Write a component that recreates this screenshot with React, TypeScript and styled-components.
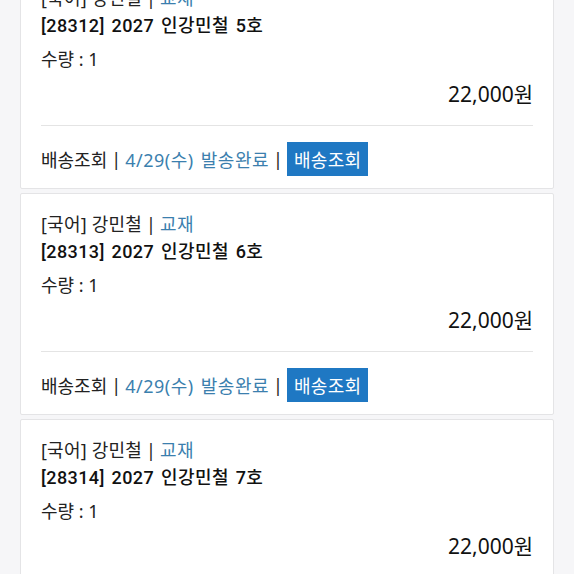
import React from "react";
import styled, { createGlobalStyle } from "styled-components";

const Global = createGlobalStyle`
  html, body { margin: 0; padding: 0; background: #f6f6f8; }
  body { font-family: "Noto Sans", "Noto Sans CJK KR", sans-serif; color: #1a1a1a; overflow: hidden; }
`;

const Page = styled.div`
  width: 574px;
  height: 574px;
  overflow: hidden;
  background: #f6f6f8;
`;

const List = styled.div`
  display: flex;
  flex-direction: column;
  gap: 4px;
  margin: -33px 20px 0 20px;
`;

const Card = styled.div`
  background: #fff;
  border: 1px solid #e4e4e6;
  border-radius: 2px;
  padding: 17px 20px 12px 20px;
  display: flex;
  flex-direction: column;
`;

const Category = styled.div`
  font-size: 18px;
  line-height: 27px;
  letter-spacing: 0.2px;
  color: #222;
`;

const Blue = styled.span`
  color: #3b7fae;
  letter-spacing: 0.5px;
  word-spacing: 2px;
`;

const Sep = styled.span`
  color: #222;
  margin: 0 4px;
`;

const Title = styled.div`
  font-family: "Roboto", "Noto Sans CJK KR", sans-serif;
  font-size: 18px;
  line-height: 27px;
  font-weight: 500;
  letter-spacing: 0.4px;
  word-spacing: 2px;
  color: #111;
`;

const Qty = styled.div`
  font-size: 18px;
  line-height: 27px;
  margin-top: 7px;
  color: #222;
`;

const Price = styled.div`
  font-size: 21px;
  line-height: 27px;
  margin-top: 8px;
  text-align: right;
  color: #111;
`;

const Divider = styled.div`
  height: 1px;
  background: #e4e4e4;
  margin-top: 17px;
`;

const Footer = styled.div`
  display: flex;
  align-items: center;
  margin-top: 16px;
  font-size: 18px;
  color: #222;
  white-space: pre;
`;

const Button = styled.span`
  display: inline-flex;
  align-items: center;
  justify-content: center;
  height: 34px;
  padding: 0 7px;
  background: #1f78c3;
  color: #fff;
  font-size: 18px;
  letter-spacing: 0.3px;
`;

const items = [
  { code: "28312", vol: "5호" },
  { code: "28313", vol: "6호" },
  { code: "28314", vol: "7호" },
];

export default function App() {
  return (
    <Page>
      <Global />
      <List>
        {items.map((it) => (
          <Card key={it.code}>
            <Category>
              [국어] 강민철<Sep>|</Sep><Blue>교재</Blue>
            </Category>
            <Title>
              [{it.code}] 2027 인강민철 {it.vol}
            </Title>
            <Qty>수량 : 1</Qty>
            <Price>22,000원</Price>
            <Divider />
            <Footer>
              배송조회<Sep>|</Sep>
              <Blue>4/29(수) 발송완료</Blue>
              <Sep>|</Sep>
              <Button>배송조회</Button>
            </Footer>
          </Card>
        ))}
      </List>
    </Page>
  );
}
